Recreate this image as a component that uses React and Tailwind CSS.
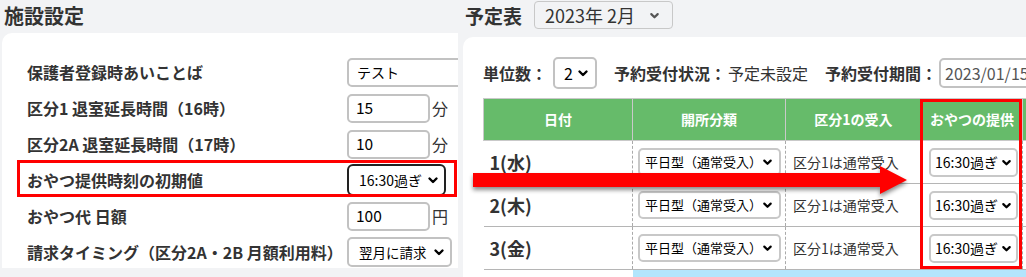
import React from 'react';

const font = { fontFamily: '"Noto Sans CJK JP", "Noto Sans", sans-serif' };

function Chevron({ className = '' }) {
  return (
    <svg viewBox="0 0 12 12" className={className} fill="none" stroke="currentColor" strokeWidth="2.4" strokeLinecap="round" strokeLinejoin="round">
      <path d="M2.5 4.5 L6 8 L9.5 4.5" />
    </svg>
  );
}

const leftRows = [
  { label: '保護者登録時あいことば', type: 'wide', value: 'テスト' },
  { label: '区分1 退室延長時間（16時）', type: 'num', value: '15', unit: '分' },
  { label: '区分2A 退室延長時間（17時）', type: 'num', value: '10', unit: '分' },
  { label: 'おやつ提供時刻の初期値', type: 'focus', value: '16:30過ぎ', mark: true },
  { label: 'おやつ代 日額', type: 'num', value: '100', unit: '円' },
  { label: '請求タイミング（区分2A・2B 月額利用料）', type: 'select', value: '翌月に請求' },
];

const days = ['1(水)', '2(木)', '3(金)'];

function LeftPanel() {
  return (
    <div className="w-[458px] shrink-0 overflow-hidden">
      <div className="h-[33px] pl-[4px] pt-[1px] text-[20px] font-bold leading-[30px] text-[#333]">施設設定</div>
      <div className="ml-[2px] w-[520px] h-[235px] rounded-tl-[10px] bg-white pl-[25px] pt-[21px]">
        {leftRows.map((r) => (
          <div key={r.label} className="relative flex h-[36px] items-center whitespace-nowrap">
            {r.mark && (
              <div className="absolute left-[-10px] top-[-2px] h-[37px] w-[440px] border-[3px] border-[#ff0000]" />
            )}
            <div className="w-[320px] shrink-0 text-[16px] font-bold text-[#333]">{r.label}</div>
            {r.type === 'wide' && (
              <div className="flex h-[29px] w-[200px] shrink-0 items-center rounded-[5px] border-2 border-[#c2c2c2] pl-[8px] text-[14px] text-black">{r.value}</div>
            )}
            {r.type === 'num' && (
              <>
                <div className="flex h-[29px] w-[83px] shrink-0 items-center rounded-[5px] border-2 border-[#c2c2c2] pl-[7px] text-[15.5px] text-black">{r.value}</div>
                <span className="ml-[2px] text-[16px] text-[#333]">{r.unit}</span>
              </>
            )}
            {r.type === 'focus' && (
              <div className="flex h-[32px] w-[99px] shrink-0 items-center justify-between rounded-[6px] border-2 border-[#222] pl-[10px] pr-[5px] text-[14px] text-black">
                {r.value}
                <Chevron className="h-[12px] w-[12px]" />
              </div>
            )}
            {r.type === 'select' && (
              <div className="flex h-[30px] w-[105px] shrink-0 items-center justify-between rounded-[5px] border-2 border-[#c2c2c2] pl-[10px] pr-[5px] text-[13.5px] text-black">
                {r.value}
                <Chevron className="h-[12px] w-[12px]" />
              </div>
            )}
          </div>
        ))}
      </div>
    </div>
  );
}

function RightPanel() {
  return (
    <div className="ml-[5px] flex-1 overflow-hidden">
      <div className="flex h-[37px] items-start whitespace-nowrap">
        <span className="ml-[2px] mt-[3px] text-[19px] font-bold leading-[26px] text-[#333]">予定表</span>
        <div className="ml-[12px] mt-[1px] flex h-[28px] w-[139px] shrink-0 items-center justify-between rounded-[4px] border border-[#c8c8c8] pl-[10px] pr-[12px] text-[18px] text-[#333]">
          2023年 2月
          <Chevron className="h-[11px] w-[11px] text-[#555]" />
        </div>
      </div>
      <div className="h-[240px] w-[620px] rounded-tl-[10px] bg-white pl-[20px] pt-[20px]">
        <div className="flex h-[32px] items-center whitespace-nowrap text-[16px] text-[#333]">
          <span className="font-bold">単位数：</span>
          <div className="ml-[6px] flex h-[32px] w-[44px] shrink-0 items-center justify-between rounded-[5px] border-2 border-[#c2c2c2] pl-[9px] pr-[6px] text-black">
            2
            <Chevron className="h-[12px] w-[12px]" />
          </div>
          <span className="ml-[17px] font-bold">予約受付状況：</span>
          <span className="ml-[2px]">予定未設定</span>
          <span className="ml-[17px] font-bold">予約受付期間：</span>
          <div className="ml-[2px] flex h-[30px] w-[140px] shrink-0 items-center rounded-l-[5px] border-2 border-[#c2c2c2] pl-[4px] text-[#555]">2023/01/15</div>
        </div>
        <div className="relative mt-[9px]">
          <table className="w-[599px] table-fixed border-collapse whitespace-nowrap text-[#333]">
            <colgroup>
              <col className="w-[149px]" />
              <col className="w-[153px]" />
              <col className="w-[136px]" />
              <col className="w-[101px]" />
              <col className="w-[60px]" />
            </colgroup>
            <thead>
              <tr className="h-[42px] bg-[#66bb6a] text-[14px] font-bold text-white">
                <th className="border border-[#c9c9c9]">日付</th>
                <th className="border border-[#c9c9c9]">開所分類</th>
                <th className="border border-[#c9c9c9]">区分1の受入</th>
                <th className="border border-[#c9c9c9]">おやつの提供</th>
                <th className="border border-[#c9c9c9]"></th>
              </tr>
            </thead>
            <tbody>
              {days.map((d) => (
                <tr key={d} className="h-[43px] border-b border-[#b5b5b5]">
                  <td className="pl-[6px] text-[18px] font-bold">{d}</td>
                  <td className="border-l border-dashed border-[#aaa] pl-[5px]">
                    <div className="flex h-[28px] w-[143px] items-center justify-between rounded-[5px] border-2 border-[#c8c8c8] pl-[5px] pr-[6px] text-[13px] text-black">
                      平日型（通常受入）
                      <Chevron className="h-[12px] w-[12px]" />
                    </div>
                  </td>
                  <td className="border-l border-dashed border-[#aaa] pl-[7px] text-[14px]">区分1は通常受入</td>
                  <td className="border-l border-dashed border-[#aaa] pl-[7px]">
                    <div className="flex h-[29px] w-[89px] items-center justify-between rounded-[5px] border-2 border-[#c8c8c8] pl-[4px] pr-[4px] text-[14px] text-black">
                      16:30過ぎ
                      <Chevron className="h-[11px] w-[11px]" />
                    </div>
                  </td>
                  <td className="border-l border-dashed border-[#aaa]"></td>
                </tr>
              ))}
              <tr className="h-[20px]">
                <td></td>
                <td className="bg-[#b3e5fc]"></td>
                <td className="bg-[#b3e5fc]"></td>
                <td className="bg-[#b3e5fc]"></td>
                <td className="bg-[#b3e5fc]"></td>
              </tr>
            </tbody>
          </table>
          <div className="absolute left-[437px] top-[1px] h-[170px] w-[102px] border-[3px] border-[#ff0000]" />
        </div>
      </div>
    </div>
  );
}

export default function App() {
  return (
    <div className="relative flex h-[277px] w-[1026px] overflow-hidden bg-[#f2f3f5]" style={font}>
      <LeftPanel />
      <RightPanel />
      <svg className="absolute left-[470px] top-[163px] h-[36px] w-[442px] drop-shadow-[0_3px_2px_rgba(0,0,0,0.45)]" viewBox="0 0 442 36">
        <path d="M3 10 L410 10 L410 3 L437 17 L410 31 L410 24 L3 24 Z" fill="#ff0000" />
      </svg>
    </div>
  );
}
